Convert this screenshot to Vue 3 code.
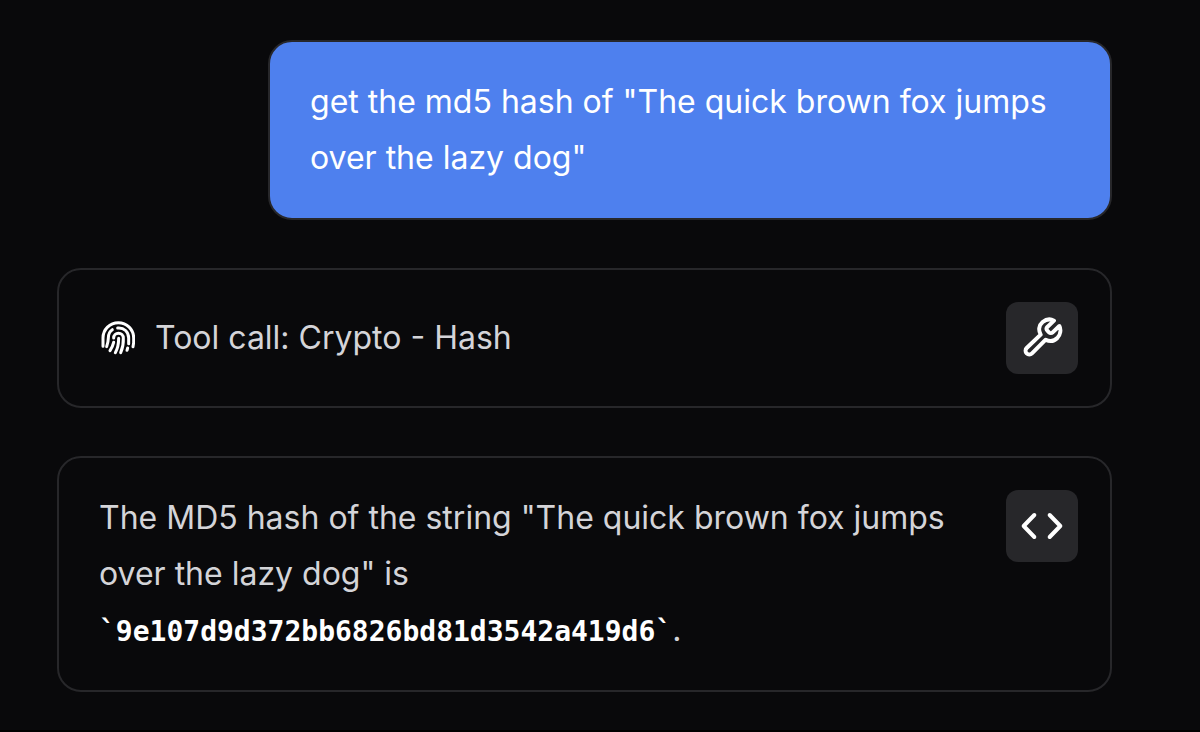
<script setup>
const question = 'get the md5 hash of "The quick brown fox jumps over the lazy dog"'
const toolCall = 'Tool call: Crypto - Hash'
const answer = 'The MD5 hash of the string "The quick brown fox jumps over the lazy dog" is'
const hash = '`9e107d9d372bb6826bd81d3542a419d6`'
</script>

<template>
  <main class="chat">
    <article class="message user">
      <p class="text">{{ question }}</p>
    </article>

    <article class="message">
      <div class="body tool">
        <svg class="print" viewBox="28 30 108 108" aria-hidden="true">
          <path d="M40 109V84A46 46 0 0 1 132 84V98L130 110" />
          <path d="M68 59C58 65 56 73 56 84C56 92 54 100 51 110" />
          <path d="M84 54C103 52 117 66 117 84V101" />
          <path d="M114 114L112 121" />
          <path d="M72 84A14.5 14.5 0 0 1 101 84C102 104 99 114 93 128" />
          <path d="M72 97C70 106 66 114 61 122" />
          <path d="M87 85C87 104 84 116 77 128" />
        </svg>
        <p class="text">{{ toolCall }}</p>
      </div>
      <button class="action" type="button" aria-label="Show tool call">
        <svg class="icon wrench" viewBox="6 12 132 132" aria-hidden="true">
          <path d="M26 108L68 68C61 55 62 40 74 30C84 22 97 20 108 26L88 45C84 49 85 53 88 56L93 61C96 64 101 64 104 61L124 42C130 53 127 68 118 78C108 88 95 89 83 83L42 124A11.3 11.3 0 0 1 26 108Z" />
        </svg>
      </button>
    </article>

    <article class="message">
      <div class="body">
        <p class="text">{{ answer }} <strong class="hash">{{ hash }}</strong>.</p>
      </div>
      <button class="action" type="button" aria-label="Show source">
        <svg class="icon code" viewBox="0 0 132 132" aria-hidden="true">
          <path d="M89 33L121 66L89 99M43 33L11 66L43 99" />
        </svg>
      </button>
    </article>
  </main>
</template>

<style>
body {
  background: #09090b;
}
</style>

<style scoped>
.chat {
  box-sizing: border-box;
  min-height: 100vh;
  display: flex;
  flex-direction: column;
  gap: 48px;
  padding: 40px 88px 38px 57px;
  border-bottom: 2px solid #000;
  font-family: Inter, "Liberation Sans", sans-serif;
  font-size: 32px;
  line-height: 56px;
  color: #d4d4d8;
}

.message {
  display: flex;
  align-items: flex-start;
  gap: 32px;
  padding: 32px 32px 32px 40px;
  border: 2px solid #27272a;
  border-radius: 24px;
}

.user {
  align-self: flex-end;
  box-sizing: border-box;
  width: 80%;
  padding: 32px 40px;
  background: #4e80ee;
  color: #fff;
}

.body {
  flex: 1;
  min-width: 0;
}

.tool {
  display: flex;
  align-items: center;
  align-self: center;
  gap: 20px;
}

.text {
  margin: 0;
}

.hash {
  font-family: "DejaVu Sans Mono", monospace;
  font-size: 28px;
  font-weight: 700;
  line-height: 1;
  color: #fff;
}

.action {
  flex: none;
  display: grid;
  place-items: center;
  width: 72px;
  height: 72px;
  padding: 0;
  border: 0;
  border-radius: 12px;
  background: #27272a;
  color: #fff;
}

.icon,
.print {
  flex: none;
  fill: none;
  stroke: currentColor;
  stroke-linecap: round;
  stroke-linejoin: round;
}

.icon {
  width: 44px;
  height: 44px;
  stroke-width: 12;
}

.print {
  width: 36px;
  height: 36px;
  stroke-width: 9;
  color: #fff;
}
</style>
